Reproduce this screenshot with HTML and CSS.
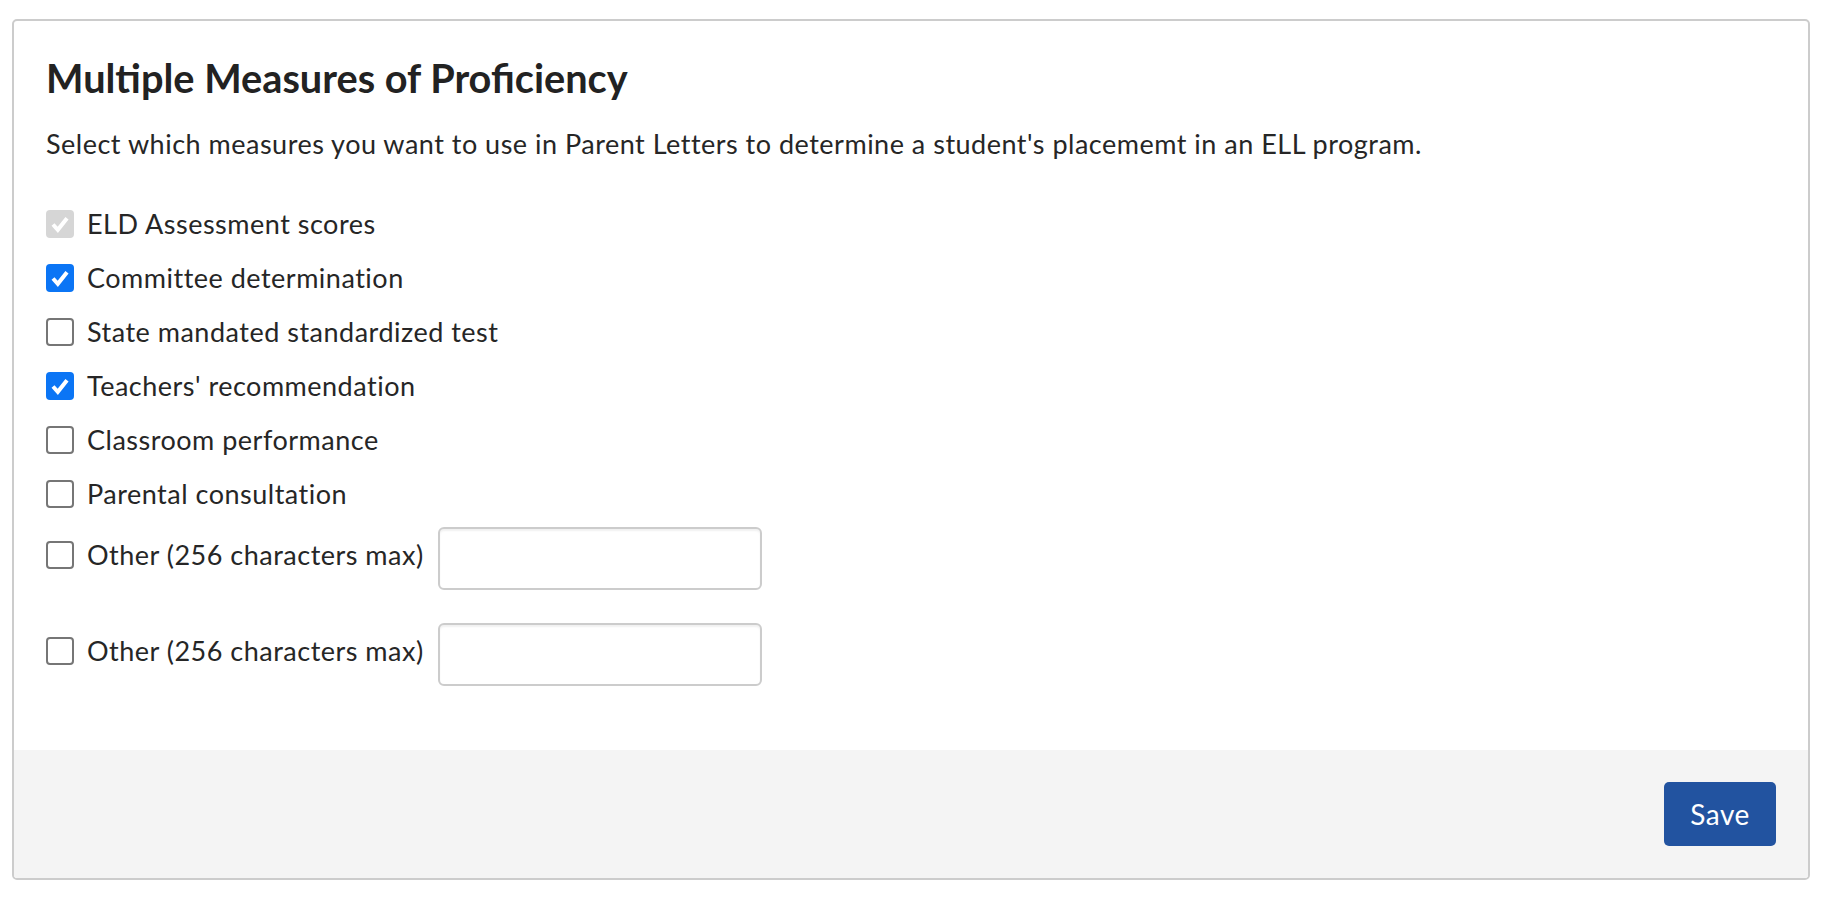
FILE: index.html
```html
<!DOCTYPE html>
<html lang="en">
<head>
<meta charset="utf-8">
<title>Multiple Measures of Proficiency</title>
<link rel="stylesheet" href="styles.css">
</head>
<body>
<section class="card">
  <div class="card-body">
    <h1 class="title">Multiple Measures of Proficiency</h1>
    <p class="intro">Select which measures you want to use in Parent Letters to determine a student's placememt in an ELL program.</p>
    <div class="measures">
      <label class="check-row">
        <input type="checkbox" class="cb-input" checked disabled>
        <span class="cb"><svg viewBox="0 0 28 28" class="tick"><path d="M7 14.5 L11.8 19.8 L21 8.2"/></svg></span>
        <span class="lbl">ELD Assessment scores</span>
      </label>
      <label class="check-row">
        <input type="checkbox" class="cb-input" checked>
        <span class="cb"><svg viewBox="0 0 28 28" class="tick"><path d="M7 14.5 L11.8 19.8 L21 8.2"/></svg></span>
        <span class="lbl">Committee determination</span>
      </label>
      <label class="check-row">
        <input type="checkbox" class="cb-input">
        <span class="cb"><svg viewBox="0 0 28 28" class="tick"><path d="M7 14.5 L11.8 19.8 L21 8.2"/></svg></span>
        <span class="lbl">State mandated standardized test</span>
      </label>
      <label class="check-row">
        <input type="checkbox" class="cb-input" checked>
        <span class="cb"><svg viewBox="0 0 28 28" class="tick"><path d="M7 14.5 L11.8 19.8 L21 8.2"/></svg></span>
        <span class="lbl">Teachers' recommendation</span>
      </label>
      <label class="check-row">
        <input type="checkbox" class="cb-input">
        <span class="cb"><svg viewBox="0 0 28 28" class="tick"><path d="M7 14.5 L11.8 19.8 L21 8.2"/></svg></span>
        <span class="lbl">Classroom performance</span>
      </label>
      <label class="check-row">
        <input type="checkbox" class="cb-input">
        <span class="cb"><svg viewBox="0 0 28 28" class="tick"><path d="M7 14.5 L11.8 19.8 L21 8.2"/></svg></span>
        <span class="lbl">Parental consultation</span>
      </label>
      <div class="other-row">
        <label class="check-row other-label">
          <input type="checkbox" class="cb-input">
          <span class="cb"><svg viewBox="0 0 28 28" class="tick"><path d="M7 14.5 L11.8 19.8 L21 8.2"/></svg></span>
          <span class="lbl">Other (256 characters max)</span>
        </label>
        <input type="text" class="other-input" maxlength="256" aria-label="Other measure">
      </div>
      <div class="other-row">
        <label class="check-row other-label">
          <input type="checkbox" class="cb-input">
          <span class="cb"><svg viewBox="0 0 28 28" class="tick"><path d="M7 14.5 L11.8 19.8 L21 8.2"/></svg></span>
          <span class="lbl">Other (256 characters max)</span>
        </label>
        <input type="text" class="other-input" maxlength="256" aria-label="Other measure">
      </div>
    </div>
  </div>
  <div class="card-footer">
    <button type="button" class="btn-save">Save</button>
  </div>
</section>
</body>
</html>
```

FILE: styles.css
```css
html, body {
  margin: 0;
  padding: 0;
  background: #ffffff;
}

body {
  font-family: "Lato", "Liberation Sans", sans-serif;
  color: #262626;
}

.card {
  margin: 19px 12px 0 12px;
  border: 2px solid #cccccc;
  border-radius: 5px;
  overflow: hidden;
  background: #ffffff;
}

.card-body {
  padding: 34px 32px 24px 32px;
}

.title {
  margin: 0;
  font-size: 39.7px;
  line-height: 46px;
  font-weight: 700;
  color: #222222;
}

.intro {
  margin: 25px 0 0 0;
  font-size: 27px;
  line-height: 36px;
  letter-spacing: 0.5px;
}

.measures {
  display: flex;
  flex-direction: column;
  margin-top: 48px;
}

.check-row {
  display: flex;
  align-items: center;
  height: 28px;
  margin-bottom: 26px;
  font-size: 27px;
  line-height: 28px;
  letter-spacing: 0.5px;
  cursor: pointer;
}

.cb-input {
  display: none;
}

.cb {
  display: flex;
  flex: 0 0 auto;
  width: 28px;
  height: 28px;
  box-sizing: border-box;
  margin-right: 13px;
  border: 2px solid #767676;
  border-radius: 4px;
  background: #ffffff;
}

.tick {
  display: none;
  width: 28px;
  height: 28px;
}

.tick path {
  fill: none;
  stroke: #ffffff;
  stroke-width: 4;
  stroke-linecap: butt;
  stroke-linejoin: miter;
}

.cb-input:checked + .cb {
  border: none;
  background: #0b75f5;
}

.cb-input:checked + .cb .tick {
  display: block;
}

.cb-input:checked:disabled + .cb {
  background: #d6d6d6;
}

.other-row {
  display: flex;
  align-items: flex-start;
  margin-top: -7px;
  margin-bottom: 40px;
}

.other-label {
  margin: 14px 0 0 0;
}

.other-input {
  margin-left: 14px;
  width: 324px;
  height: 63px;
  box-sizing: border-box;
  border: 2px solid #cccccc;
  border-radius: 6px;
  box-shadow: inset 0 2px 2px rgba(0, 0, 0, 0.06);
  font-family: inherit;
  font-size: 27px;
  padding: 0 12px;
  outline: none;
}

.card-footer {
  display: flex;
  justify-content: flex-end;
  background: #f4f4f4;
  padding: 32px;
}

.btn-save {
  width: 112px;
  height: 64px;
  border: none;
  border-radius: 5px;
  background: #2253a0;
  color: #ffffff;
  font-family: inherit;
  font-size: 28px;
  letter-spacing: 0.5px;
  cursor: pointer;
}
```
